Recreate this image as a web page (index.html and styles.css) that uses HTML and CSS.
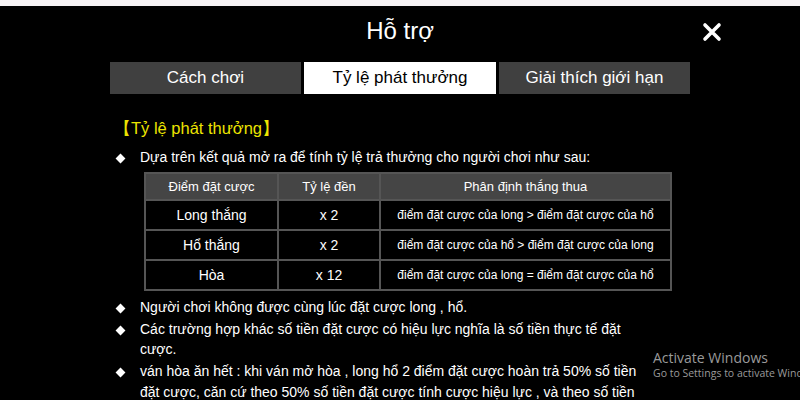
FILE: index.html
```html
<!DOCTYPE html>
<html lang="vi">
<head>
<meta charset="utf-8">
<link rel="stylesheet" href="styles.css">
</head>
<body>
<div class="strip"></div>
<div class="page">
  <header class="header">
    <h1 class="title">Hỗ trợ</h1>
    <span class="close">
      <svg width="20" height="20" viewBox="0 0 20 20"><path d="M3 3 L17 17 M17 3 L3 17" stroke="#fff" stroke-width="3.6" stroke-linecap="round"/></svg>
    </span>
  </header>
  <nav class="tabs">
    <div class="tab">Cách chơi</div>
    <div class="tab active">Tỷ lệ phát thưởng</div>
    <div class="tab">Giải thích giới hạn</div>
  </nav>
  <section class="content">
    <h2 class="heading">【Tỷ lệ phát thưởng】</h2>
    <div class="item"><span class="dia"></span><p>Dựa trên kết quả mở ra để tính tỷ lệ trả thưởng cho người chơi như sau:</p></div>
    <table class="odds">
      <tr><th class="c1">Điểm đặt cược</th><th class="c2">Tỷ lệ đền</th><th class="c3">Phân định thắng thua</th></tr>
      <tr><td>Long thắng</td><td>x 2</td><td class="rule">điểm đặt cược của long &gt; điểm đặt cược của hổ</td></tr>
      <tr><td>Hổ thắng</td><td>x 2</td><td class="rule">điểm đặt cược của hổ &gt; điểm đặt cược của long</td></tr>
      <tr><td>Hòa</td><td>x 12</td><td class="rule">điểm đặt cược của long = điểm đặt cược của hổ</td></tr>
    </table>
    <div class="item after"><span class="dia"></span><p>Người chơi không được cùng lúc đặt cược long , hổ.</p></div>
    <div class="item"><span class="dia"></span><p>Các trường hợp khác số tiền đặt cược có hiệu lực nghĩa là số tiền thực tế đặt cược.</p></div>
    <div class="item"><span class="dia"></span><p>ván hòa ăn hết : khi ván mở hòa , long hổ 2 điểm đặt cược hoàn trả 50% số tiền đặt cược, căn cứ theo 50% số tiền đặt cược tính cược hiệu lực , và theo số tiền</p></div>
  </section>
</div>
<div class="watermark">
  <div class="wm1">Activate Windows</div>
  <div class="wm2">Go to Settings to activate Windows.</div>
</div>
</body>
</html>
```
FILE: styles.css
```css
html, body {
  margin: 0;
  padding: 0;
  background: #000;
  overflow: hidden;
}
body {
  width: 800px;
  height: 400px;
  font-family: "Liberation Sans", Arial, sans-serif;
  color: #fff;
  position: relative;
}
.strip {
  height: 6px;
  background: #f7f3f5;
}
.page {
  display: flex;
  flex-direction: column;
}
.header {
  height: 56px;
  display: flex;
  align-items: center;
  justify-content: center;
  position: relative;
}
.title {
  margin: 0;
  font-size: 24px;
  font-weight: normal;
  line-height: 1;
  transform: translateY(-3px);
}
.close {
  position: absolute;
  left: 702px;
  top: 16px;
  width: 20px;
  height: 20px;
}
.tabs {
  display: flex;
  gap: 3px;
  margin-left: 110px;
  height: 32px;
}
.tab {
  width: 191px;
  background: #404040;
  color: #fff;
  font-size: 17px;
  display: flex;
  align-items: center;
  justify-content: center;
}
.tab.active {
  width: 192px;
  background: #fff;
  color: #000;
}
.content {
  padding-left: 114px;
  padding-top: 20px;
}
.heading {
  margin: 0 0 5px 0;
  font-size: 16.5px;
  font-weight: normal;
  color: #ece400;
  line-height: 28px;
}
.item {
  display: flex;
  align-items: flex-start;
  margin-top: 1.5px;
}
.item p {
  margin: 0;
  font-size: 14px;
  line-height: 20.5px;
  width: 500px;
  color: #fff;
}
.item.after {
  margin-top: 6px;
}
.dia {
  width: 7px;
  height: 7px;
  background: #fff;
  transform: rotate(45deg);
  margin: 8px 16px 0 3px;
  flex: none;
}
.odds {
  margin: 4px 0 0 30px;
  border-collapse: collapse;
  border: 2px solid #555;
  font-size: 14px;
}
.odds th, .odds td {
  border: 2px solid #555;
  text-align: center;
  padding: 0;
  height: 28px;
  color: #fff;
}
.odds th {
  background: #454545;
  font-weight: normal;
  font-size: 13px;
  height: 25px;
}
.odds .c1 { width: 131px; }
.odds .c2 { width: 100px; }
.odds .c3 { width: 289px; }
.odds td.rule {
  font-size: 12px;
}
.watermark {
  position: absolute;
  left: 653px;
  top: 349px;
  white-space: nowrap;
  color: #9a9a9a;
  font-family: "Open Sans", "Noto Sans", sans-serif;
}
.wm1 {
  font-size: 14px;
  line-height: 17px;
}
.wm2 {
  font-size: 10.5px;
  line-height: 14px;
}
```
